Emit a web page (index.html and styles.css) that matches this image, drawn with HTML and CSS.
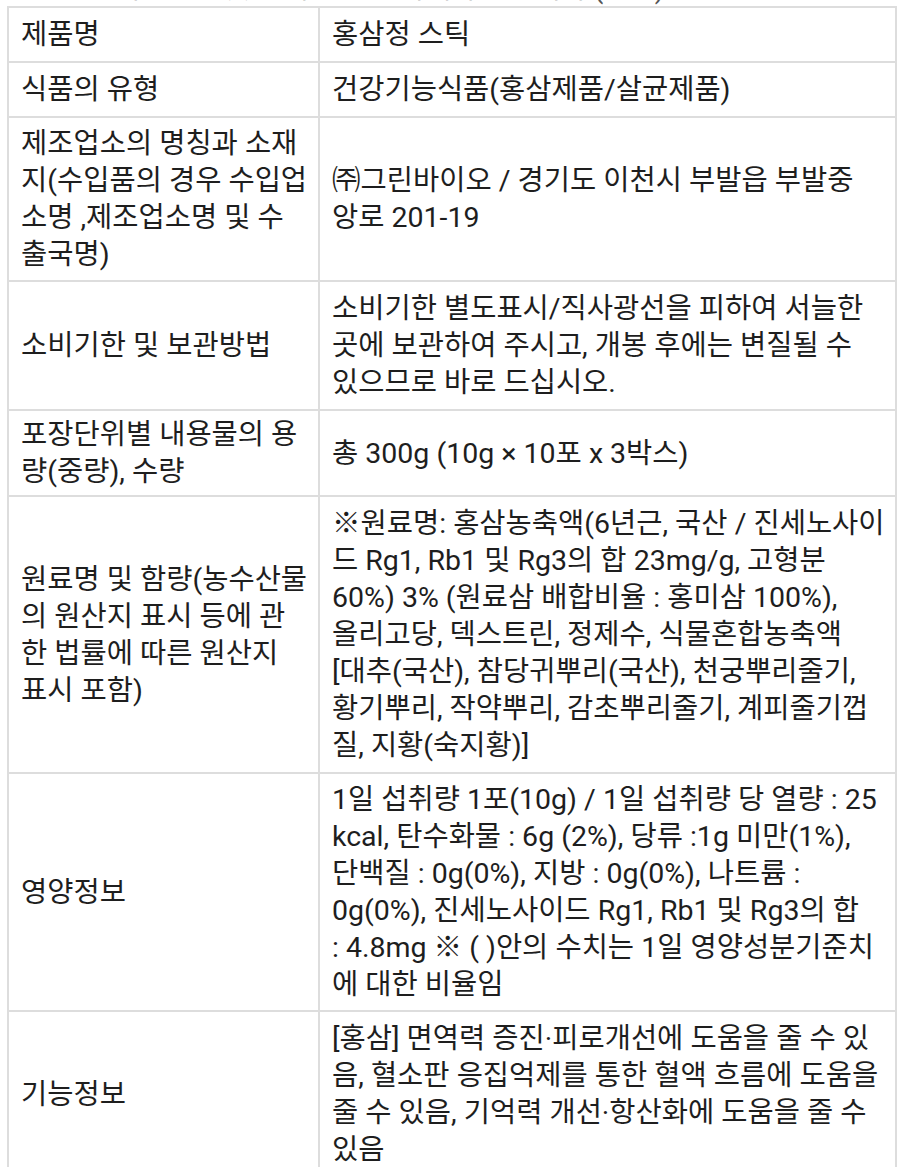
FILE: index.html
```html
<!DOCTYPE html>
<html lang="ko">
<head>
<meta charset="utf-8">
<link rel="stylesheet" href="styles.css">
</head>
<body>
<div class="clip"><p class="prev">상품정보제공고시 및 상세 정보는 아래와 같습니다 (참고)</p></div>
<table class="info">
  <colgroup><col class="c1"><col class="c2"></colgroup>
  <tr><th>제품명</th><td>홍삼정 스틱</td></tr>
  <tr><th>식품의 유형</th><td>건강기능식품(홍삼제품/살균제품)</td></tr>
  <tr class="tight"><th>제조업소의 명칭과 소재<br>지(수입품의 경우 수입업<br>소명 ,제조업소명 및 수<br>출국명)</th><td>㈜그린바이오 / 경기도 이천시 부발읍 부발중<br>앙로 201-19</td></tr>
  <tr><th>소비기한 및 보관방법</th><td>소비기한 별도표시/직사광선을 피하여 서늘한<br>곳에 보관하여 주시고, 개봉 후에는 변질될 수<br>있으므로 바로 드십시오.</td></tr>
  <tr class="tighter"><th>포장단위별 내용물의 용<br>량(중량), 수량</th><td>총 300g (10g × 10포 x 3박스)</td></tr>
  <tr><th>원료명 및 함량(농수산물<br>의 원산지 표시 등에 관<br>한 법률에 따른 원산지<br>표시 포함)</th><td>※원료명: 홍삼농축액(6년근, 국산 / 진세노사이<br>드 Rg1, Rb1 및 Rg3의 합 23mg/g, 고형분<br>60%) 3% (원료삼 배합비율 : 홍미삼 100%),<br>올리고당, 덱스트린, 정제수, 식물혼합농축액<br>[대추(국산), 참당귀뿌리(국산), 천궁뿌리줄기,<br>황기뿌리, 작약뿌리, 감초뿌리줄기, 계피줄기껍<br>질, 지황(숙지황)]</td></tr>
  <tr class="tight"><th>영양정보</th><td>1일 섭취량 1포(10g) / 1일 섭취량 당 열량 : 25<br>kcal, 탄수화물 : 6g (2%), 당류 :1g 미만(1%),<br>단백질 : 0g(0%), 지방 : 0g(0%), 나트륨 :<br>0g(0%), 진세노사이드 Rg1, Rb1 및 Rg3의 합<br>: 4.8mg ※ ( )안의 수치는 1일 영양성분기준치<br>에 대한 비율임</td></tr>
  <tr><th>기능정보</th><td>[홍삼] 면역력 증진·피로개선에 도움을 줄 수 있<br>음, 혈소판 응집억제를 통한 혈액 흐름에 도움을<br>줄 수 있음, 기억력 개선·항산화에 도움을 줄 수<br>있음</td></tr>
</table>
</body>
</html>
```
FILE: styles.css
```css
html, body {
  margin: 0;
  padding: 0;
  background: #ffffff;
}
body {
  padding: 0 5px 0 7px;
  font-family: Roboto, "Noto Sans CJK KR", sans-serif;
  color: #1e1e1e;
}
.clip {
  height: 6px;
  overflow: hidden;
}
.prev {
  margin: -30px 0 0 4px;
  font-size: 28px;
  line-height: 37px;
  color: #555;
  white-space: nowrap;
}
.info {
  border-collapse: collapse;
  width: 888px;
  table-layout: fixed;
  font-size: 28.5px;
  line-height: 37px;
}
.c1 { width: 311px; }
.c2 { width: 577px; }
.info th, .info td {
  border: 2px solid #dddddd;
  padding: 8px 10px 8px 12px;
  text-align: left;
  font-weight: 400;
  vertical-align: middle;
  white-space: nowrap;
  overflow: hidden;
}
.info .tight th, .info .tight td {
  padding-top: 7px;
  padding-bottom: 7px;
}
.info .tighter th, .info .tighter td {
  padding-top: 5px;
  padding-bottom: 5px;
}
```
